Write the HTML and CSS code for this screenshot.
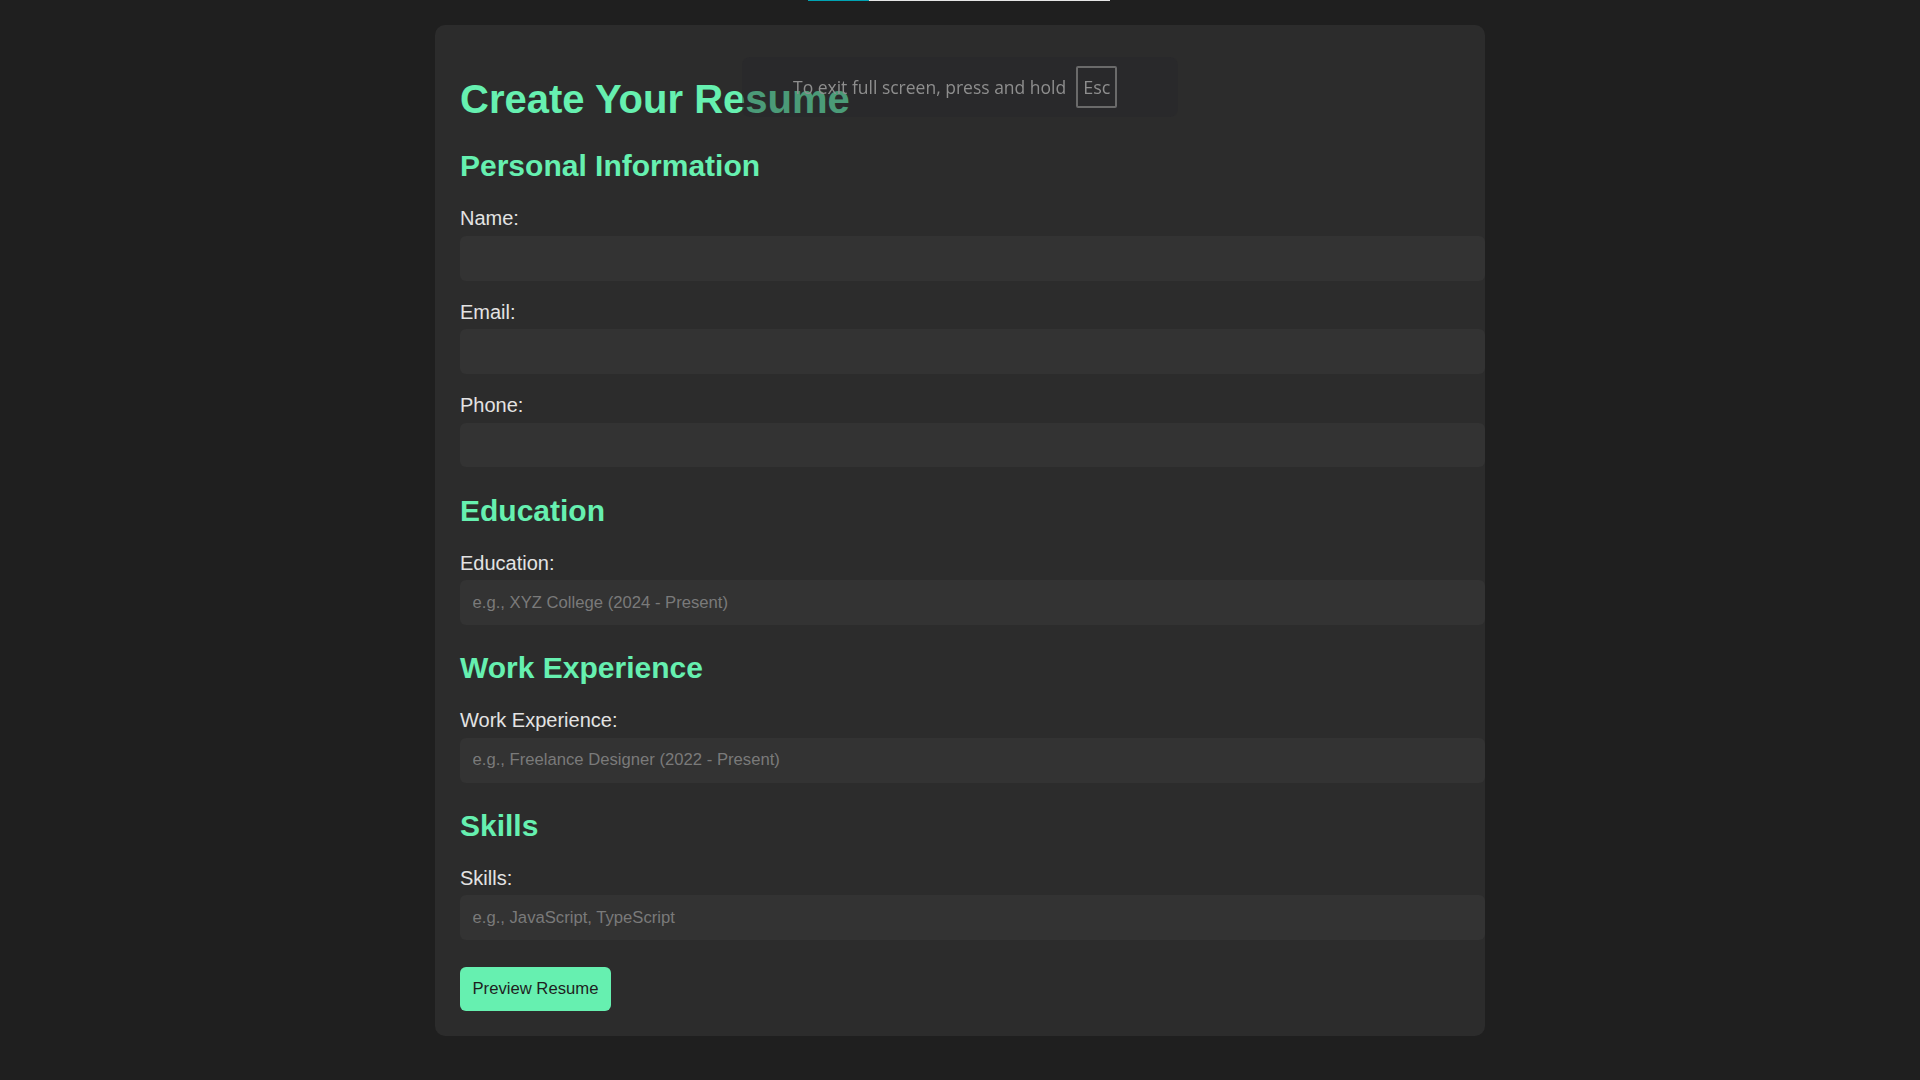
FILE: index.html
```html
<!DOCTYPE html>
<html lang="en">
<head>
<meta charset="utf-8">
<title>Resume Builder</title>
<link rel="stylesheet" href="styles.css">
</head>
<body>
<div class="loadbar"><span class="loadbar-done"></span><span class="loadbar-rest"></span></div>
<div class="container">
  <h1>Create Your Resume</h1>
  <form class="resume-form">
    <h2>Personal Information</h2>
    <label for="name">Name:</label>
    <input id="name" type="text">
    <label for="email">Email:</label>
    <input id="email" type="email">
    <label for="phone">Phone:</label>
    <input id="phone" type="tel">

    <h2>Education</h2>
    <label for="education">Education:</label>
    <input id="education" type="text" placeholder="e.g., XYZ College (2024 - Present)">

    <h2>Work Experience</h2>
    <label for="work">Work Experience:</label>
    <input id="work" type="text" placeholder="e.g., Freelance Designer (2022 - Present)">

    <h2>Skills</h2>
    <label for="skills">Skills:</label>
    <input id="skills" type="text" placeholder="e.g., JavaScript, TypeScript">

    <button type="button" class="btn-preview">Preview Resume</button>
  </form>
</div>
<div class="fs-toast">
  <span class="fs-text">To exit full screen, press and hold</span>
  <span class="fs-key">Esc</span>
</div>
</body>
</html>
```
FILE: styles.css
```css
html, body {
  margin: 0;
  background: #1f1f1f;
}
body {
  padding: 25px 0;
  font-family: "Liberation Sans", Arial, sans-serif;
  color: #e0e0e0;
}
.container {
  width: 1050px;
  box-sizing: border-box;
  margin: 0 auto;
  padding: 25px;
  background: #2c2c2c;
  border-radius: 10px;
}
h1 {
  font-size: 40px;
  font-weight: bold;
  color: #66f0b0;
  margin: 26.8px 0 27.4px;
}
h2 {
  font-size: 30px;
  font-weight: bold;
  color: #66f0b0;
  margin: 26.1px 0 24.3px;
}
.resume-form label {
  display: block;
  font-size: 20px;
  line-height: 23px;
  color: #e3e3e3;
  margin-bottom: 5.5px;
}
.resume-form input {
  display: block;
  box-sizing: content-box;
  width: 100%;
  height: 19.7px;
  padding: 12.5px;
  margin: 0 0 20.2px 0;
  border: 0;
  border-radius: 6px;
  background: #333333;
  color: #e0e0e0;
  font-family: "Liberation Sans", Arial, sans-serif;
  font-size: 16.67px;
  outline: none;
}
.resume-form input::placeholder {
  color: #7a7a7a;
}
.btn-preview {
  display: block;
  margin-top: 26.6px;
  padding: 12.5px;
  border: 0;
  border-radius: 6px;
  background: #66f0b0;
  color: #1e1e1e;
  font-family: "Liberation Sans", Arial, sans-serif;
  font-size: 16.67px;
  line-height: 19.4px;
  cursor: pointer;
}
.loadbar {
  position: fixed;
  top: 0;
  left: 808px;
  width: 302px;
  height: 1px;
  display: flex;
}
.loadbar-done {
  width: 61px;
  background: #00a3b3;
}
.loadbar-rest {
  flex: 1;
  background: #e6e6e6;
}
.fs-toast {
  position: fixed;
  top: 57px;
  left: 742px;
  width: 436px;
  height: 60px;
  box-sizing: border-box;
  padding: 0 51px;
  display: flex;
  align-items: center;
  gap: 10px;
  background: rgba(38, 39, 43, 0.42);
  border-radius: 8px;
}
.fs-text {
  font-family: "Open Sans", "Noto Sans", sans-serif;
  font-size: 17.5px;
  color: #8e8e8e;
  white-space: nowrap;
}
.fs-key {
  box-sizing: border-box;
  flex: none;
  width: 41px;
  height: 42px;
  display: flex;
  align-items: center;
  justify-content: center;
  border: 2px solid #6a6a6a;
  border-radius: 2px;
  font-family: "Open Sans", "Noto Sans", sans-serif;
  font-size: 18px;
  color: #8e8e8e;
}
```
